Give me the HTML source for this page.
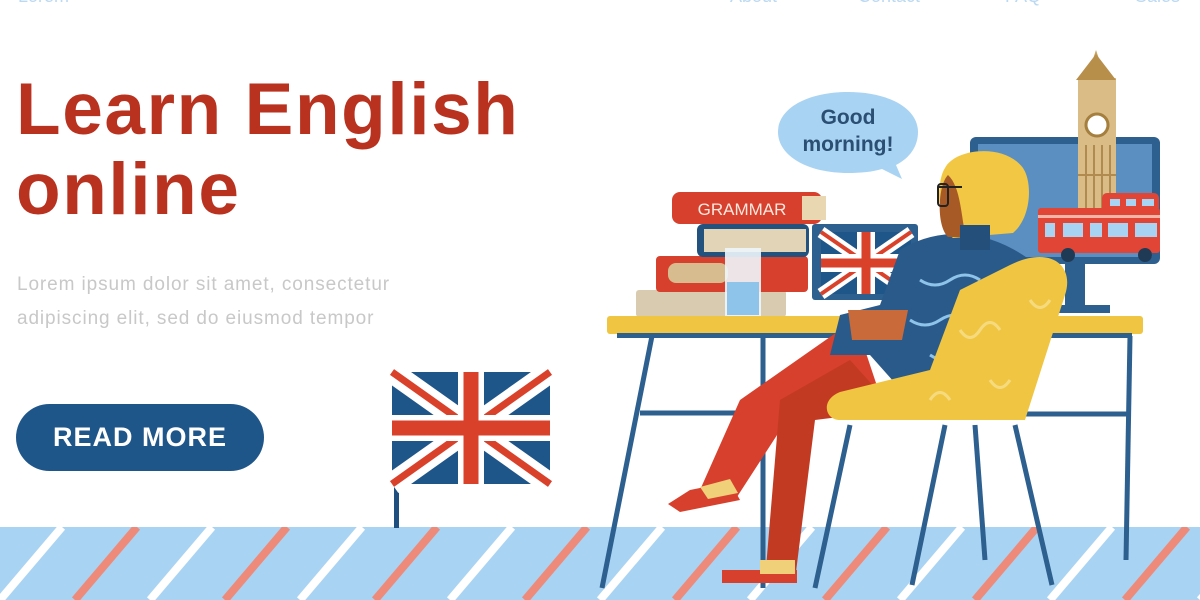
<!DOCTYPE html>
<html><head><meta charset="utf-8"><style>
html,body{margin:0;padding:0;background:#fff;width:1200px;height:600px;overflow:hidden;font-family:"Liberation Sans",sans-serif}
.abs{position:absolute}
</style></head><body>
<svg class="abs" style="left:0;top:0" width="1200" height="600" viewBox="0 0 1200 600">
<g fill="#bcd9f2" font-size="18" font-family="Liberation Sans">
<text x="18" y="2">Lorem</text><text x="730" y="2">About</text><text x="858" y="2">Contact</text><text x="1005" y="2">FAQ</text><text x="1135" y="2">Sales</text>
</g>
<defs><clipPath id="fl"><rect x="0" y="527" width="1200" height="73"/></clipPath></defs>
<rect x="0" y="527" width="1200" height="73" fill="#a9d3f2"/>
<g clip-path="url(#fl)" stroke-width="8">
<g stroke="#fff">
<line x1="0" y1="600" x2="62" y2="527"/><line x1="150" y1="600" x2="212" y2="527"/><line x1="300" y1="600" x2="362" y2="527"/><line x1="450" y1="600" x2="512" y2="527"/><line x1="600" y1="600" x2="662" y2="527"/><line x1="750" y1="600" x2="812" y2="527"/><line x1="900" y1="600" x2="962" y2="527"/><line x1="1050" y1="600" x2="1112" y2="527"/><line x1="1200" y1="600" x2="1262" y2="527"/>
</g>
<g stroke="#ee8a7a">
<line x1="75" y1="600" x2="137" y2="527"/><line x1="225" y1="600" x2="287" y2="527"/><line x1="375" y1="600" x2="437" y2="527"/><line x1="525" y1="600" x2="587" y2="527"/><line x1="675" y1="600" x2="737" y2="527"/><line x1="825" y1="600" x2="887" y2="527"/><line x1="975" y1="600" x2="1037" y2="527"/><line x1="1125" y1="600" x2="1187" y2="527"/>
</g>
</g>
<rect x="394" y="372" width="5" height="156" fill="#1f4f7e"/>
<g transform="translate(392,372)">
<rect width="158" height="112" fill="#1f5689"/>
<path d="M0 0L158 112M158 0L0 112" stroke="#fff" stroke-width="22"/>
<path d="M0 0L158 112M158 0L0 112" stroke="#d9412b" stroke-width="7"/>
<path d="M79 0V112M0 56H158" stroke="#fff" stroke-width="26"/>
<path d="M79 0V112M0 56H158" stroke="#d9412b" stroke-width="15"/>
</g>
<path d="M848 92c40 0 70 16 70 40c0 14-8 26-22 33l6 14l-20-10c-10 3-22 4-34 4c-40 0-70-17-70-41s30-40 70-40z" fill="#a9d3f2"/>
<text x="848" y="124" text-anchor="middle" font-size="21" font-weight="bold" fill="#2a4f73">Good</text>
<text x="848" y="151" text-anchor="middle" font-size="21" font-weight="bold" fill="#2a4f73">morning!</text>
<rect x="1065" y="255" width="20" height="55" fill="#2d5f8f"/>
<rect x="1045" y="305" width="65" height="8" fill="#2d5f8f"/>
<rect x="970" y="137" width="190" height="127" rx="6" fill="#2d5f8f"/>
<rect x="978" y="144" width="174" height="113" fill="#5b8fc2"/>
<path d="M1096 50l-10 30h20z" fill="#c9a25c"/>
<rect x="1078" y="78" width="38" height="150" fill="#d9bc86"/>
<path d="M1076 80l20-26l20 26z" fill="#b88f4a"/>
<circle cx="1097" cy="125" r="11" fill="#fff" stroke="#a57f3e" stroke-width="3"/>
<g stroke="#b08a4f" stroke-width="2"><line x1="1086" y1="145" x2="1086" y2="225"/><line x1="1094" y1="145" x2="1094" y2="225"/><line x1="1102" y1="145" x2="1102" y2="225"/><line x1="1110" y1="145" x2="1110" y2="225"/><line x1="1078" y1="175" x2="1116" y2="175"/></g>
<rect x="1102" y="193" width="57" height="20" rx="5" fill="#e04536"/>
<rect x="1038" y="208" width="122" height="45" rx="3" fill="#e04536"/>
<rect x="1038" y="215" width="122" height="3" fill="#f3b6a8"/>
<g fill="#a9d3f2"><rect x="1045" y="223" width="10" height="14"/><rect x="1063" y="223" width="20" height="14"/><rect x="1090" y="223" width="12" height="14"/><rect x="1108" y="223" width="20" height="14"/><rect x="1135" y="223" width="22" height="14"/><rect x="1110" y="199" width="10" height="7"/><rect x="1126" y="199" width="10" height="7"/><rect x="1142" y="199" width="12" height="7"/></g>
<circle cx="1068" cy="255" r="7" fill="#1f3a55"/><circle cx="1145" cy="255" r="7" fill="#1f3a55"/>
<rect x="636" y="290" width="150" height="27" rx="3" fill="#d9cbb0"/>
<rect x="656" y="256" width="152" height="36" rx="4" fill="#d7402c"/>
<rect x="668" y="263" width="60" height="20" rx="8" fill="#d6bc8e"/>
<rect x="697" y="224" width="112" height="33" rx="6" fill="#24527e"/>
<rect x="704" y="229" width="102" height="23" fill="#e2d4b6"/>
<rect x="672" y="192" width="150" height="32" rx="8" fill="#d7402c"/>
<rect x="802" y="196" width="24" height="24" fill="#e8d7b0"/>
<text x="742" y="215" text-anchor="middle" font-size="17" fill="#fbe8df" font-family="Liberation Sans">GRAMMAR</text>
<rect x="725" y="248" width="36" height="68" fill="#eef6fc" opacity="0.9"/>
<rect x="727" y="282" width="32" height="33" fill="#8fc4ea"/>
<rect x="812" y="224" width="106" height="76" rx="3" fill="#2d5f8f"/>
<g transform="translate(821,232)">
<rect width="90" height="62" fill="#1f5689"/>
<path d="M0 0L90 62M90 0L0 62" stroke="#fff" stroke-width="12"/>
<path d="M0 0L90 62M90 0L0 62" stroke="#d9412b" stroke-width="4"/>
<path d="M45 0V62M0 31H90" stroke="#fff" stroke-width="18"/>
<path d="M45 0V62M0 31H90" stroke="#d9412b" stroke-width="9"/>
</g>
<rect x="607" y="316" width="536" height="18" rx="3" fill="#f0c542"/>
<rect x="617" y="333" width="515" height="5" fill="#2d5f8f"/>
<g stroke="#2d5f8f" stroke-width="5" fill="none">
<line x1="652" y1="336" x2="602" y2="588"/><line x1="763" y1="336" x2="763" y2="588"/>
<line x1="640" y1="413" x2="763" y2="413"/>
<line x1="1130" y1="336" x2="1126" y2="560"/><line x1="1000" y1="414" x2="1128" y2="414"/>
</g>
<path d="M840 330l-100 70l-40 90l35 10l55-85l90-20l-20-60z" fill="#d7402c"/>
<path d="M850 360l-70 40l-15 180l30 0l20-160l80-10z" fill="#c23a22"/>
<path d="M690 490l40-8l10 18l-60 12l-12-8z" fill="#d7402c"/>
<path d="M700 487l30-8l8 14l-30 6z" fill="#f1d07a"/>
<path d="M722 570h75v13h-75z" fill="#d7402c"/>
<path d="M760 560h35v14h-35z" fill="#f1d07a"/>
<path d="M900 250c40-25 90-20 130 10l20 80l-40 60h-100l-40-45l-40 0l10-40l40-10z" fill="#2a5a8a"/>
<path d="M920 280q15 10 30 0t30 0M910 320q15 10 30 0t30 0M930 355q15 10 30 0" stroke="#8fc4ea" stroke-width="3" fill="none"/>
<path d="M848 310h60l-6 30h-50z" fill="#c86a3a"/>
<path d="M945 168c10-20 60-25 78 0c10 15 8 50-10 65l-60 5c-15-10-18-55-8-70z" fill="#f2c744"/>
<path d="M948 175c-10 10-12 50 0 62l18 0c-5-20-5-50-18-62z" fill="#a85a26"/>
<rect x="960" y="225" width="30" height="25" fill="#244f7b"/>
<path d="M938 187h24" stroke="#222" stroke-width="2"/><rect x="938" y="184" width="10" height="22" rx="3" fill="none" stroke="#222" stroke-width="2"/>
<path d="M1010 265c40-20 65 0 55 30l-40 125h-185c-15 0-20-20 0-28l90-22l30-80z" fill="#f0c542"/>
<path d="M960 330q10 15 20 0t20 0M990 380q10 15 20 0M930 400q10 -15 20 0M1030 300q10 15 20 0" stroke="#f6db7e" stroke-width="3" fill="none"/>
<g stroke="#2d5f8f" stroke-width="5"><line x1="850" y1="425" x2="815" y2="588"/><line x1="945" y1="425" x2="912" y2="585"/><line x1="1015" y1="425" x2="1052" y2="585"/><line x1="975" y1="425" x2="985" y2="560"/></g>
</svg>
<div class="abs" style="left:16px;top:70px;color:#b9321f;font-weight:bold;font-size:73px;line-height:80px;letter-spacing:1.6px">Learn English<br>online</div>
<div class="abs" style="left:17px;top:268px;color:#c8c8c8;font-size:19px;line-height:34px;letter-spacing:0.9px">Lorem ipsum dolor sit amet, consectetur<br>adipiscing elit, sed do eiusmod tempor</div>
<div class="abs" style="left:16px;top:404px;width:248px;height:67px;border-radius:34px;background:#1f5689;color:#fff;font-weight:900;font-size:27px;line-height:67px;text-align:center;letter-spacing:1px">READ MORE</div>
</body></html>
